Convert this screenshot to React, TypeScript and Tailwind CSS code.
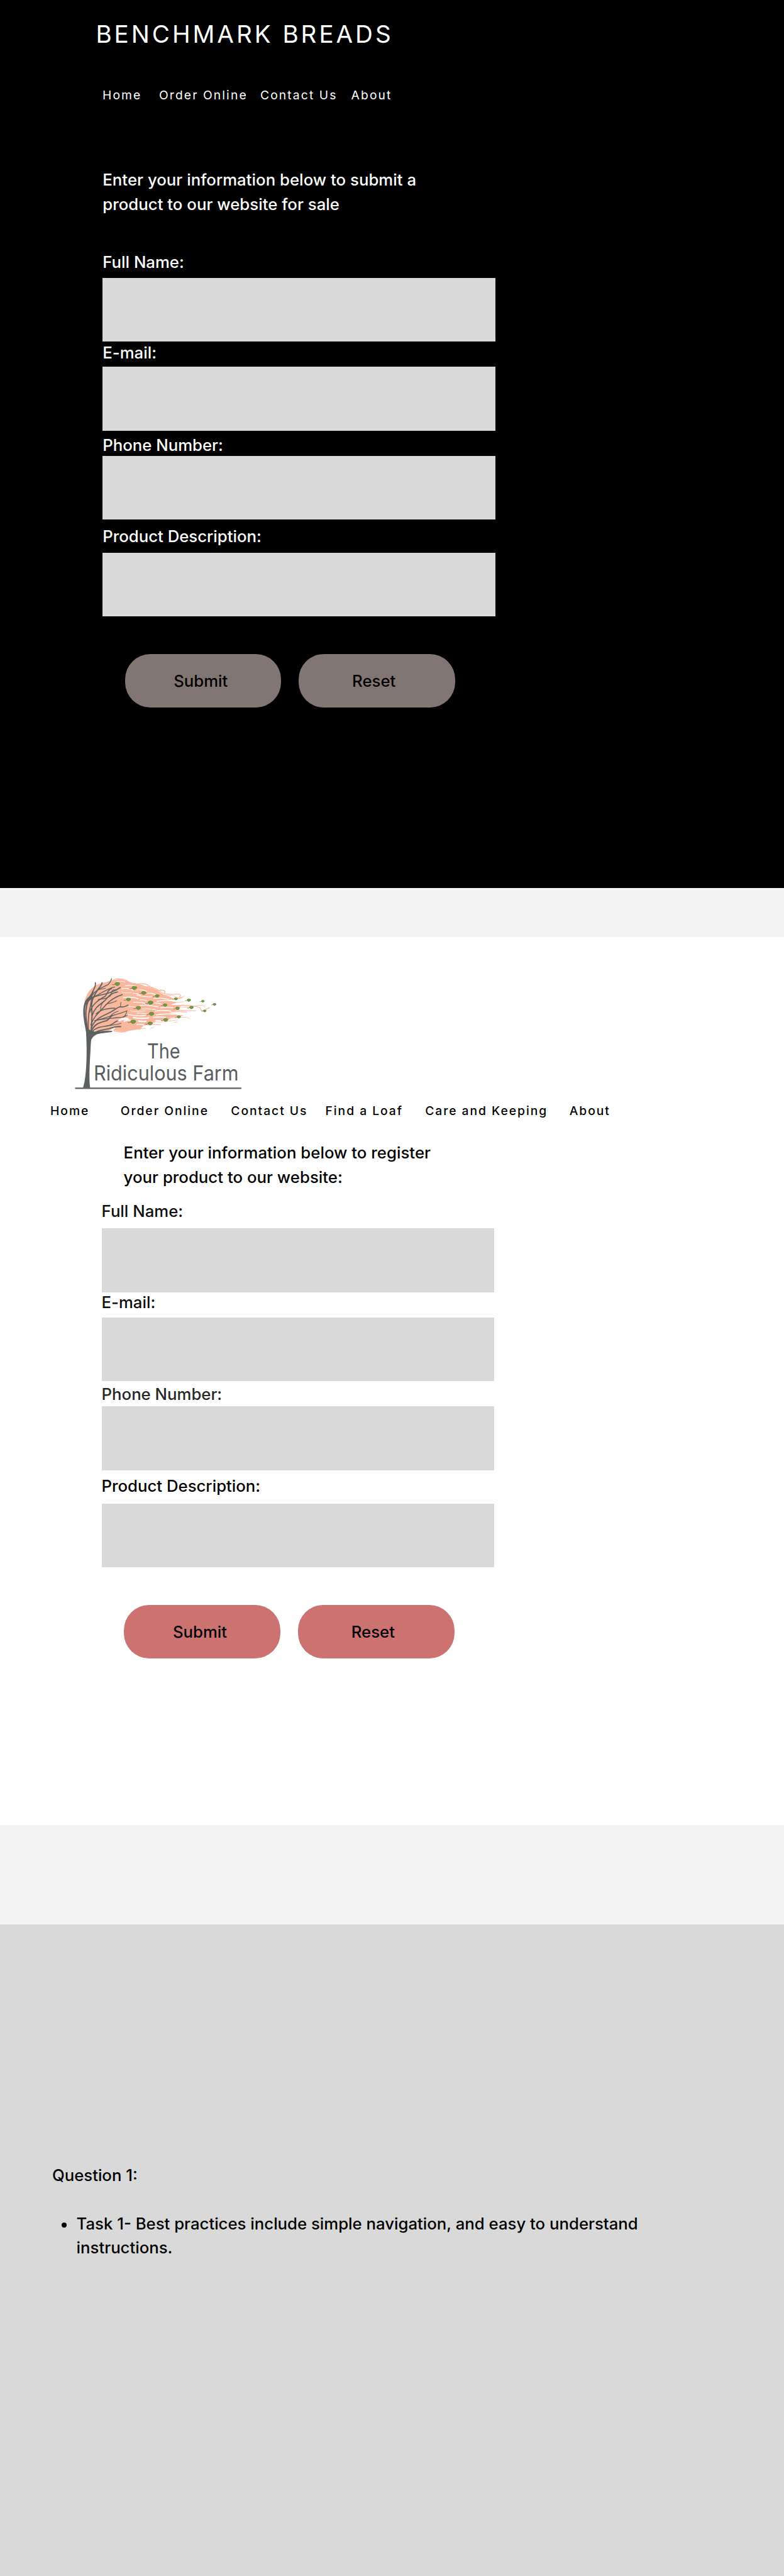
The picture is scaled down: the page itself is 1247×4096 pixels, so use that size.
import type { ReactNode } from "react";

type FieldProps = {
  label: string;
  labelClass: string;
  inputClass: string;
};

function Field({ label, labelClass, inputClass }: FieldProps) {
  return (
    <label className="block">
      <span className={`block text-[25.74px] leading-[31px] font-medium ${labelClass}`}>{label}</span>
      <input className={`block h-[101.4px] w-[624.3px] bg-[#d9d9d9] outline-none ${inputClass}`} />
    </label>
  );
}

function PillButton({ children, className }: { children: ReactNode; className: string }) {
  return (
    <button
      type="button"
      className={`flex h-[85.3px] w-[248.8px] items-center rounded-[40.2px] text-[25.74px] leading-[31px] font-medium text-black ${className}`}
    >
      {children}
    </button>
  );
}

// [x, y, scale]
const leaves: [number, number, number][] = [
  [303, 103, 1.1], [404, 126, 1.1], [460, 156, 1.05], [540, 174, 0.95], [651, 191, 0.8],
  [728, 199, 0.85], [811, 205, 0.7], [880, 224, 0.75], [369, 195, 1], [500, 214, 1.15],
  [587, 228, 0.9], [661, 247, 0.9], [743, 242, 0.9], [822, 263, 0.7], [428, 245, 1.05],
  [506, 280, 1.1], [668, 298, 0.85], [590, 316, 1], [397, 327, 1.15], [498, 337, 1.05],
];

// [path, stroke width]
const branches: [string, number][] = [
  ["M133 460C132 390 109 345 107 275C105 220 122 190 150 176", 10],
  ["M138 420C124 360 114 310 118 260C122 215 138 180 160 150", 8],
  ["M120 225C135 190 165 178 200 170C240 160 275 155 322 124", 6],
  ["M132 395C132 330 128 300 140 255C150 215 152 190 155 160C160 130 178 130 174 94", 6],
  ["M148 410C150 350 158 300 152 240C148 200 170 165 190 135C202 118 212 112 214 96", 7],
  ["M155 170C180 130 225 122 250 106C264 94 266 84 270 72", 5],
  ["M185 140C205 132 220 132 234 128", 4],
  ["M118 205C150 180 185 172 215 152C240 140 262 126 288 121", 5],
  ["M140 270C160 215 200 195 232 176C250 160 242 138 270 130", 6],
  ["M192 195C220 190 252 190 266 168C275 150 262 136 300 138", 5],
  ["M155 290C172 235 205 225 232 200C250 176 268 156 306 150", 6],
  ["M148 345C165 290 205 265 235 228C262 198 290 180 334 166", 6],
  ["M245 220C270 215 285 210 300 202", 4],
  ["M178 280C205 255 238 248 290 246", 5],
  ["M205 255C204 225 216 216 224 204", 4],
  ["M150 365C170 310 210 295 252 276C285 262 300 242 322 238C340 242 355 236 368 228", 6],
  ["M322 240C326 228 322 222 326 212", 4],
  ["M170 320C220 310 250 298 276 290C312 280 330 275 362 262", 5],
  ["M262 294C280 274 296 268 310 265", 4],
  ["M180 318C230 308 272 306 300 303C328 302 340 300 362 290", 5],
  ["M340 300C354 290 358 276 360 264", 4],
  ["M148 390C165 340 200 330 242 320C256 312 260 298 275 290", 7],
  ["M145 400C175 350 220 360 260 348C278 340 286 330 304 322", 6],
  ["M260 350C290 342 308 345 326 336", 4],
  ["M150 408C180 375 225 376 256 368C280 360 296 352 324 356", 7],
  ["M150 425C170 388 220 390 270 384", 8],
];

const streaks: [string, number][] = [
  ["M300 88Q330 82 350 92", 3], ["M352 112Q385 108 412 116", 4], ["M330 132Q370 124 396 140", 5],
  ["M420 138Q450 134 478 146", 4], ["M330 150Q350 160 386 154", 3], ["M398 158Q430 160 440 168", 5],
  ["M485 158Q510 156 530 166", 5], ["M340 184Q390 176 428 190", 6], ["M420 170Q460 182 510 178", 4],
  ["M438 198Q460 194 478 202", 4], ["M520 190Q560 182 608 194", 5], ["M540 206Q590 196 650 206", 5],
  ["M400 212Q440 208 476 220", 5], ["M526 216Q545 216 566 222", 5], ["M440 230Q500 226 548 240", 5],
  ["M370 238Q390 234 408 240", 3], ["M560 244Q590 238 636 244", 5], ["M450 252Q490 246 532 256", 4],
  ["M382 262Q410 270 470 262", 3], ["M530 264Q570 256 622 264", 5], ["M420 276Q450 272 480 282", 4],
  ["M536 286Q580 278 644 282", 6], ["M370 284Q410 294 470 290", 5], ["M400 302Q450 310 490 304", 7],
  ["M518 300Q550 298 590 300", 6], ["M430 322Q460 328 474 324", 8], ["M530 320Q555 318 566 324", 6],
  ["M318 318Q340 306 366 310", 12], ["M345 324Q360 314 380 318", 7], ["M420 342Q446 340 460 346", 6],
];

const strands: [string, number][] = [
  ["M270 84Q300 66 330 76T382 96T440 102T500 120T560 140T584 158", 5],
  ["M300 80Q340 66 362 84T410 100", 4],
  ["M480 118Q530 124 556 146T640 164T672 180", 4],
  ["M560 170Q620 164 650 178T702 174", 3],
  ["M600 184Q650 200 690 184", 4],
  ["M560 214Q640 216 700 208", 3],
  ["M600 234Q680 226 740 232T800 254T850 244", 5],
  ["M620 240Q700 246 760 234T826 240", 3],
  ["M600 256Q690 260 768 262", 4],
  ["M600 270Q660 264 716 270", 4],
  ["M570 294Q630 292 690 290", 6],
  ["M600 308Q660 302 690 300T734 310", 3],
  ["M480 324Q540 330 570 328T660 316", 3],
  ["M440 348Q500 340 560 344", 4],
  ["M400 366Q440 370 470 366", 3],
  ["M280 380Q340 398 370 378T440 372", 4],
  ["M500 366L522 360", 3],
  ["M640 330L660 328", 3],
];

function FarmLogo() {
  return (
    <svg viewBox="0 0 1110 810" className="block h-[217.2px] w-[297.7px]" aria-label="The Ridiculous Farm">
      <path
        d="M106 270C100 165 150 105 235 92C290 74 350 70 376 96C430 96 480 120 530 136C560 150 570 166 612 176L640 192L600 200L660 212L622 226L690 234L640 248L680 256L610 270L650 284L684 292L620 304L600 322L540 318L510 340L460 350L440 370L390 378L330 388L280 378L300 352L250 384L160 388L135 380C125 340 108 320 106 270Z"
        fill="#f9b79e"
      />
      <g fill="none" stroke="#f9b79e" strokeLinecap="round">
        {strands.map(([d, w]) => (
          <path key={d} d={d} strokeWidth={w} />
        ))}
      </g>
      <g fill="none" stroke="#ffffff" strokeLinecap="round">
        {streaks.map(([d, w]) => (
          <path key={d} d={d} strokeWidth={w} />
        ))}
      </g>
      <path d="M158 388Q164 374 178 376L160 392Z" fill="#ffffff" />
      <g fill="none" stroke="#5c6061" strokeLinecap="round" strokeLinejoin="round">
        {branches.map(([d, w]) => (
          <path key={d} d={d} strokeWidth={w} />
        ))}
      </g>
      <path
        d="M100 719C116 680 123 580 122 480C121 430 120 390 116 355L126 356L136 372L152 380L172 386C205 382 240 378 270 386C225 396 180 392 160 412C146 428 148 450 145 500C139 590 136 670 143 719Z"
        fill="#5c6061"
      />
      <path d="M54 721H1040" stroke="#5c6061" strokeWidth="8" />
      {leaves.map(([x, y, s]) => (
        <g key={`${x}-${y}`} transform={`translate(${x} ${y}) scale(${s})`}>
          <path d="M-25 4Q-18 7 -10 1" fill="none" stroke="#a5524a" strokeWidth="3" strokeLinecap="round" />
          <path
            d="M-12 0C-11 -8 -3 -10 4 -8L12 -6L14 0C11 6 4 11 -5 8Z"
            fill="#67a03a"
            stroke="#64703c"
            strokeWidth="2.5"
          />
        </g>
      ))}
      <g fill="#5a5d5e" fontFamily="Inter, sans-serif" fontSize="123">
        <text x="481" y="545" textLength="196" lengthAdjust="spacingAndGlyphs">
          The
        </text>
        <text x="164" y="675" textLength="860" lengthAdjust="spacingAndGlyphs">
          Ridiculous Farm
        </text>
      </g>
    </svg>
  );
}

export default function App() {
  return (
    <main className="h-[4096px] w-[1247px] overflow-hidden bg-[#f4f4f4] font-[Inter,sans-serif]">
      <section className="flow-root h-[1411.9px] bg-black text-white">
        <h1 className="mt-[31px] ml-[152.4px] text-[38.6px] leading-[46px] tracking-[3.96px] whitespace-nowrap">
          BENCHMARK BREADS
        </h1>
        <nav className="mt-[62px] ml-[163px] flex text-[19.3px] leading-6 tracking-[2.1px] whitespace-nowrap">
          <a className="w-[90px]">Home</a>
          <a className="w-[161px]">Order Online</a>
          <a className="w-[144.6px]">Contact Us</a>
          <a>About</a>
        </nav>
        <form className="mt-[104px] ml-[163.3px]">
          <p className="w-[520px] text-[25.74px] leading-[38.6px] font-medium tracking-[0.03px]">
            Enter your information below to submit a<br />
            product to our website for sale
          </p>
          <Field label="Full Name:" labelClass="mt-[57.2px]" inputClass="mt-[9.2px]" />
          <Field label="E-mail:" labelClass="mt-[2.3px]" inputClass="mt-[6.9px]" />
          <Field label="Phone Number:" labelClass="mt-[7.1px]" inputClass="mt-[2.1px]" />
          <Field label="Product Description:" labelClass="mt-[10.9px]" inputClass="mt-[11.1px]" />
          <div className="mt-[59.5px] ml-[35.4px] flex gap-[28px]">
            <PillButton className="bg-[#817674] pl-[77.5px]">Submit</PillButton>
            <PillButton className="bg-[#817674] pl-[84.6px]">Reset</PillButton>
          </div>
        </form>
      </section>

      <section className="mt-[78.1px] flow-root h-[1411.8px] bg-white text-black">
        <div className="mt-[46.6px] ml-[104.6px]">
          <FarmLogo />
        </div>
        <nav className="mt-[0.3px] ml-[80px] flex text-[19.3px] leading-6 font-medium tracking-[1.96px] whitespace-nowrap">
          <a className="w-[111.7px]">Home</a>
          <a className="w-[175.6px]">Order Online</a>
          <a className="w-[150.2px]">Contact Us</a>
          <a className="w-[158.7px]">Find a Loaf</a>
          <a className="w-[229.5px]">Care and Keeping</a>
          <a>About</a>
        </nav>
        <form className="mt-[36px] ml-[161.6px]">
          <p className="ml-[35px] w-[520px] text-[25.74px] leading-[38.6px] font-medium tracking-[0.03px]">
            Enter your information below to register
            <br />
            your product to our website:
          </p>
          <Field label="Full Name:" labelClass="mt-[19.1px] text-[#0f0f0f]" inputClass="mt-[11.9px]" />
          <Field label="E-mail:" labelClass="text-[#0f0f0f]" inputClass="mt-[9.1px]" />
          <Field label="Phone Number:" labelClass="mt-[4.7px] text-[#272727]" inputClass="mt-[4.5px]" />
          <Field label="Product Description:" labelClass="mt-[9px]" inputClass="mt-[13px]" />
          <div className="mt-[59.5px] ml-[35.4px] flex gap-[28px]">
            <PillButton className="bg-[#cc7372] pl-[78px]">Submit</PillButton>
            <PillButton className="bg-[#cc7372] pl-[85px]">Reset</PillButton>
          </div>
        </form>
      </section>

      <section className="mt-[158.5px] flow-root h-[1035.7px] bg-[#d9d9d9] text-[25.74px] leading-[38.6px] font-medium text-black">
        <h2 className="mt-[379.3px] ml-[82.9px]">Question 1:</h2>
        <ul className="mt-[38.4px] ml-[98px]">
          <li className="flex">
            <span className="mt-[17.4px] mr-[15.6px] size-[8px] shrink-0 rounded-full bg-black" />
            <span className="whitespace-nowrap">
              Task 1- Best practices include simple navigation, and easy to understand
              <br />
              instructions.
            </span>
          </li>
        </ul>
      </section>
    </main>
  );
}
